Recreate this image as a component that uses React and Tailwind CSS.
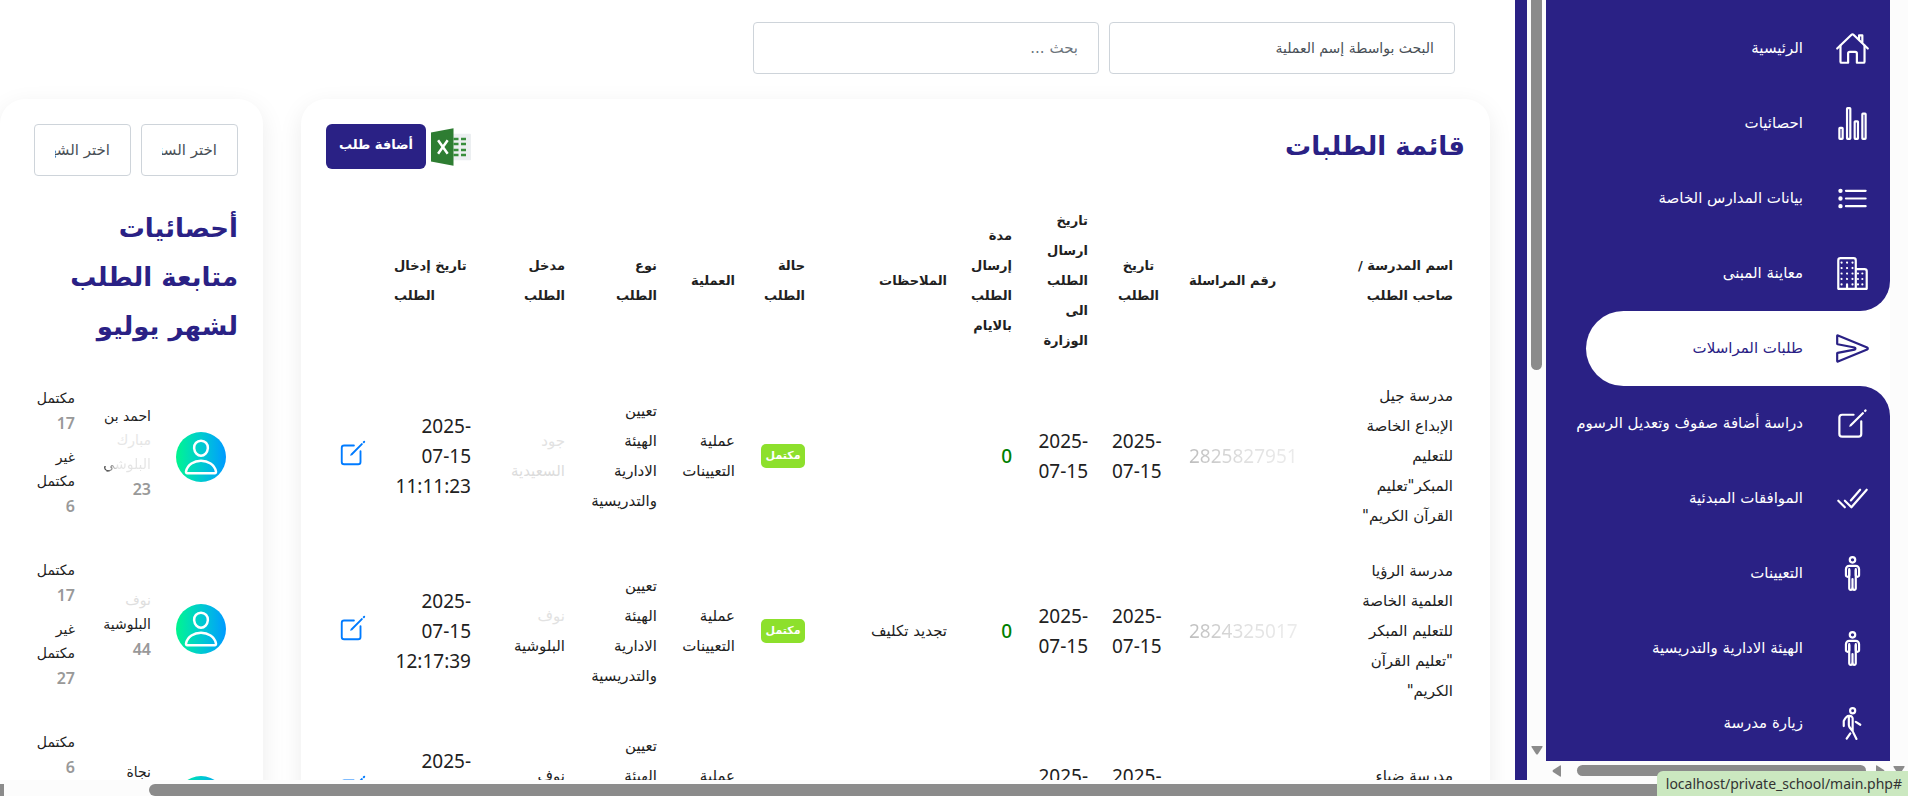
import {
  IoHomeOutline,
  IoStatsChartOutline,
  IoListOutline,
  IoBusinessOutline,
  IoSendOutline,
  IoCreateOutline,
  IoCheckmarkDoneOutline,
  IoManOutline,
  IoWalkOutline,
  IoPersonOutline,
} from "react-icons/io5";

const NAV = [
  { label: "الرئيسية", Icon: IoHomeOutline },
  { label: "احصائيات", Icon: IoStatsChartOutline },
  { label: "بيانات المدارس الخاصة", Icon: IoListOutline },
  { label: "معاينة المبنى", Icon: IoBusinessOutline, corner: "rounded-br-[30px]" },
  { label: "طلبات المراسلات", Icon: IoSendOutline, active: true },
  { label: "دراسة أضافة صفوف وتعديل الرسوم", Icon: IoCreateOutline, corner: "rounded-tr-[30px]" },
  { label: "الموافقات المبدئية", Icon: IoCheckmarkDoneOutline },
  { label: "التعيينات", Icon: IoManOutline },
  { label: "الهيئة الادارية والتدريسية", Icon: IoManOutline },
  { label: "زيارة مدرسة", Icon: IoWalkOutline },
];

const COLS = [
  { w: "w-[152px]", head: ["اسم المدرسة /", "صاحب الطلب"] },
  { w: "w-[136px]", head: ["رقم المراسلة"], align: "text-left" },
  { w: "w-[77px]", head: ["تاريخ", "الطلب"], align: "text-center" },
  { w: "w-[76px]", head: ["تاريخ", "ارسال", "الطلب", "الى", "الوزارة"] },
  { w: "w-[65px]", head: ["مدة", "إرسال", "الطلب", "بالايام"] },
  { w: "w-[142px]", head: ["الملاحظات"] },
  { w: "w-[70px]", head: ["حالة", "الطلب"] },
  { w: "w-[78px]", head: ["العملية"] },
  { w: "w-[92px]", head: ["نوع", "الطلب"] },
  { w: "w-[94px]", head: ["مدخل", "الطلب"] },
  { w: "w-[101px]", head: ["تاريخ إدخال", "الطلب"], align: "text-left" },
  { w: "w-[56px]", head: [""] },
];

const TYPE = ["تعيين", "الهيئة", "الادارية", "والتدريسية"];

const ROWS = [
  {
    school: ["مدرسة جيل", "الإبداع الخاصة", "للتعليم", "المبكر\"تعليم", "القرآن الكريم\""],
    number: "2825827951",
    days: "0",
    note: "",
    status: "مكتمل",
    by: [["جود", "text-[#e2e2e2]"], ["السعيدية", "text-[#dcdcdc]"]],
    time: "11:11:23",
  },
  {
    school: ["مدرسة الرؤيا", "العلمية الخاصة", "للتعليم المبكر", "\"تعليم القرآن", "الكريم\""],
    number: "2824325017",
    days: "0",
    note: "تجديد تكليف",
    status: "مكتمل",
    by: [["نوف", "text-[#e2e2e2]"], ["البلوشية", ""]],
    time: "12:17:39",
  },
  {
    school: ["مدرسة ضياء", "المعرفة"],
    number: "",
    days: "",
    note: "",
    status: "",
    by: [["نوف", ""], ["البلوشية", ""]],
    time: "12:20:41",
  },
];

const STAFF = [
  {
    name: [
      ["احمد بن", ""],
      ["مبارك", "text-[#e6e6e6]"],
      ["البلوشي", "w-fit bg-linear-to-l from-[#e4e4e4] from-70% to-[#222] bg-clip-text text-transparent"],
    ],
    total: 23,
    done: 17,
    open: 6,
  },
  { name: [["نوف", "text-[#dedede]"], ["البلوشية", ""]], total: 44, done: 17, open: 27 },
  { name: [["نجاة", ""], ["البلوشية", ""]], total: 12, done: 6, open: 6 },
];

const AR = "font-['DejaVu_Sans',sans-serif]";
const NUM = "font-['Noto_Sans','Open_Sans',sans-serif]";
const COUNT = "block text-[16px] leading-[27px] font-semibold text-[#999]";

function Lines({ items }) {
  return items.map((line, i) => (
    <span key={i} className="block whitespace-nowrap">
      {line}
    </span>
  ));
}

function ExcelIcon() {
  return (
    <svg viewBox="0 0 48 48" className="size-10" aria-hidden="true">
      <path fill="#eceff1" d="M26 8h21a1 1 0 0 1 1 1v30a1 1 0 0 1-1 1H26z" />
      <path
        fill="#388e3c"
        d="M27 13h6v3h-6zM36 13h6v3h-6zM27 19h6v3h-6zM36 19h6v3h-6zM27 26h6v3h-6zM36 26h6v3h-6zM27 32h6v3h-6zM36 32h6v3h-6z"
      />
      <path fill="#2e7d32" d="M27 1.500 27 46.500 0 41.500V6.500z" />
      <path stroke="#fff" strokeWidth="3" d="m8.500 16 11.500 16M20 16 8.500 32" />
    </svg>
  );
}

function Sidebar() {
  return (
    <aside className="w-[344px] grow bg-white">
      <nav>
        <div className="h-[11px] bg-[#2a2185]" />
        <ul>
          {NAV.map(({ label, Icon, active, corner = "" }) => (
            <li key={label} className={`bg-[#2a2185] ${corner}`}>
              <a
                href="#"
                className={`flex h-[75px] items-center text-[15px] ${
                  active ? "ml-10 rounded-l-full bg-white text-[#2a2185]" : "text-white"
                }`}
              >
                <span className="mr-5 flex w-[67px]">
                  <Icon className="size-[35px]" />
                </span>
                <span className="whitespace-nowrap">{label}</span>
              </a>
            </li>
          ))}
        </ul>
      </nav>
    </aside>
  );
}

function RequestsTable() {
  const cell = "px-3 pt-3 pb-[13px]";
  const digits = `${NUM} ${cell} text-[19px]`;
  return (
    <table className="mt-[25px] w-full table-fixed text-right text-[15px] leading-[30px] text-[#212121]">
      <thead>
        <tr>
          {COLS.map(({ w, head, align = "text-right" }, i) => (
            <th key={i} scope="col" className={`${w} ${align} px-3 pt-3 pb-[13px] text-[13px] font-bold`}>
              <Lines items={head} />
            </th>
          ))}
        </tr>
      </thead>
      <tbody>
        {ROWS.map((r) => (
          <tr key={r.time}>
            <td className={cell}>
              <Lines items={r.school} />
            </td>
            <td dir="ltr" className={`${digits} text-left`}>
              <span className="bg-linear-to-r from-[#bdbdbd] via-[#e0e0e0] to-[#ececec] bg-clip-text text-transparent">
                {r.number}
              </span>
            </td>
            <td dir="ltr" className={`${digits} text-left`}>
              <Lines items={["2025-", "07-15"]} />
            </td>
            <td dir="ltr" className={`${digits} text-right`}>
              <Lines items={["2025-", "07-15"]} />
            </td>
            <td className={`${digits} font-medium text-[#008000]`}>{r.days}</td>
            <td className={`${cell} whitespace-nowrap`}>{r.note}</td>
            <td className={cell}>
              {r.status && (
                <span className="flex h-6 w-11 items-center justify-center rounded-[5px] bg-[#8de02c] text-[11px] font-bold whitespace-nowrap text-white">
                  {r.status}
                </span>
              )}
            </td>
            <td className={cell}>
              <Lines items={["عملية", "التعيينات"]} />
            </td>
            <td className={cell}>
              <Lines items={TYPE} />
            </td>
            <td className={cell}>
              {r.by.map(([word, tone]) => (
                <span key={word} className={`block ${tone}`}>
                  {word}
                </span>
              ))}
            </td>
            <td dir="ltr" className={`${digits} text-right`}>
              <Lines items={["2025-", "07-15", r.time]} />
            </td>
            <td className="px-[14px] pb-2">
              <a href="#" aria-label="تعديل" className="flex text-[#007bff]">
                <IoCreateOutline className="size-[30px] shrink-0" />
              </a>
            </td>
          </tr>
        ))}
      </tbody>
    </table>
  );
}

function StaffCard() {
  const select =
    "h-[52px] w-full min-w-0 appearance-none rounded border border-[#ced4da] bg-white px-5 text-[15px] text-[#495057]";
  return (
    <section className="w-[263px] shrink-0 rounded-[25px] bg-white py-[25px] pr-[25px] pl-[34px] shadow-[0_7px_25px_rgba(0,0,0,0.08)]">
      <div className="flex gap-[10px]">
        <select aria-label="السنة" className={select}>
          <option>اختر السنة</option>
        </select>
        <select aria-label="الشهر" className={select}>
          <option>اختر الشهر</option>
        </select>
      </div>
      <h2 className="mt-7 text-[26px] leading-[49px] font-bold text-[#2a2185]">
        <Lines items={["أحصائيات", "متابعة الطلب", "لشهر يوليو"]} />
      </h2>
      <table className="mt-4 w-full table-fixed text-right text-[14px] leading-6 text-[#222]">
        <tbody>
          {STAFF.map((s) => (
            <tr key={s.total} className="h-[172px]">
              <td className="w-[75px] pt-2 pr-3">
                <span className="flex size-[50px] items-center justify-center rounded-full bg-linear-to-r from-[#00f58c] to-[#0099ff] text-white">
                  <IoPersonOutline className="size-10" />
                </span>
              </td>
              <td className="w-[76px] pr-3">
                {s.name.map(([word, tone]) => (
                  <span key={word} className={`block whitespace-nowrap ${tone}`}>
                    {word}
                  </span>
                ))}
                <span className={`${NUM} ${COUNT}`}>{s.total}</span>
              </td>
              <td className="pr-3">
                <Lines items={["مكتمل"]} />
                <span className={`${NUM} ${COUNT} mb-2`}>{s.done}</span>
                <Lines items={["غير", "مكتمل"]} />
                <span className={`${NUM} ${COUNT}`}>{s.open}</span>
              </td>
            </tr>
          ))}
        </tbody>
      </table>
    </section>
  );
}

function Arrow({ d }) {
  return (
    <svg viewBox="0 0 12 12" className="size-3 shrink-0 fill-[#8b8b8b]" aria-hidden="true">
      <path d={d} />
    </svg>
  );
}

const DOWN = "M1 2h10q1 0 .5 1L7 10q-1 1-2 0L.5 3Q0 2 1 2z";
const LEFT = "M10 1v10q0 1-1 .5L2 7q-1-1 0-2L9 .5q1-.5 1 .5z";
const RIGHT = "M2 1v10q0 1 1 .5L10 7q1-1 0-2L3 .5Q2 0 2 1z";

export default function App() {
  return (
    <div dir="rtl" className={`flex h-screen flex-col overflow-hidden bg-white ${AR}`}>
      <div className="flex min-h-0 grow">
        <div className="flex w-[18px] shrink-0 flex-col items-center justify-end bg-[#fcfcfc] pb-1">
          <Arrow d={DOWN} />
        </div>
        <div className="flex w-[344px] shrink-0 flex-col">
          <div className="flex min-h-0 grow flex-col overflow-hidden">
            <Sidebar />
          </div>
          <div className="flex h-[19px] shrink-0 items-center justify-between bg-[#fcfcfc] pr-1 pl-[5px]">
            <Arrow d={RIGHT} />
            <div className="mr-2 ml-[14px] h-[11px] grow rounded-full bg-[#8b8b8b]" />
            <Arrow d={LEFT} />
          </div>
        </div>
        <div className="flex w-[19px] shrink-0 flex-col items-center justify-between bg-[#fcfcfc] pb-6">
          <div className="h-[49%] w-[11px] rounded-b-full bg-[#8b8b8b]" />
          <Arrow d={DOWN} />
        </div>
        <div className="w-3 shrink-0 bg-[#2a2185]" />
        <main className="min-w-0 grow overflow-hidden">
          <div className="flex gap-[10px] pt-[22px] pr-[60px]">
            <select
              aria-label="البحث بواسطة"
              className="h-[52px] w-[346px] appearance-none rounded border border-[#ced4da] bg-white px-5 text-[14px] text-[#495057]"
            >
              <option>البحث بواسطة إسم العملية</option>
            </select>
            <input
              type="text"
              aria-label="بحث"
              placeholder="بحث ..."
              className="h-[52px] w-[346px] rounded border border-[#ced4da] bg-white px-5 text-[15px] placeholder:text-[#6c757d]"
            />
          </div>
          <div className="mt-[25px] flex items-start gap-[38px] pr-[25px]">
            <section className="min-w-0 grow rounded-[25px] bg-white p-[25px] shadow-[0_7px_25px_rgba(0,0,0,0.08)]">
              <div className="flex items-start justify-between">
                <h1 className="text-[26px] leading-[45px] font-bold text-[#2a2185]">قائمة الطلبات</h1>
                <div className="flex items-center gap-[5px]">
                  <button type="button" aria-label="تصدير إلى إكسل" className="h-10">
                    <ExcelIcon />
                  </button>
                  <button
                    type="button"
                    className="h-[45px] w-[100px] rounded-md bg-[#2a2185] pb-1 text-[13px] font-bold whitespace-nowrap text-white"
                  >
                    أضافة طلب
                  </button>
                </div>
              </div>
              <RequestsTable />
            </section>
            <StaffCard />
          </div>
        </main>
      </div>
      <div className="flex h-4 shrink-0 items-end bg-[#fcfcfc]">
        <div className="h-3 grow rounded-l-full bg-[#8b8b8b]" />
        <div className="mr-[145px] h-3 w-1 bg-[#8b8b8b]" />
      </div>
      <div
        dir="ltr"
        className="absolute right-0 bottom-0 flex h-[25px] items-center rounded-tl-md bg-[#cbe8c0] pr-[6px] pl-[9px] font-['Noto_Sans',sans-serif] text-[14px] text-[#333]"
      >
        localhost/private_school/main.php#
      </div>
    </div>
  );
}
